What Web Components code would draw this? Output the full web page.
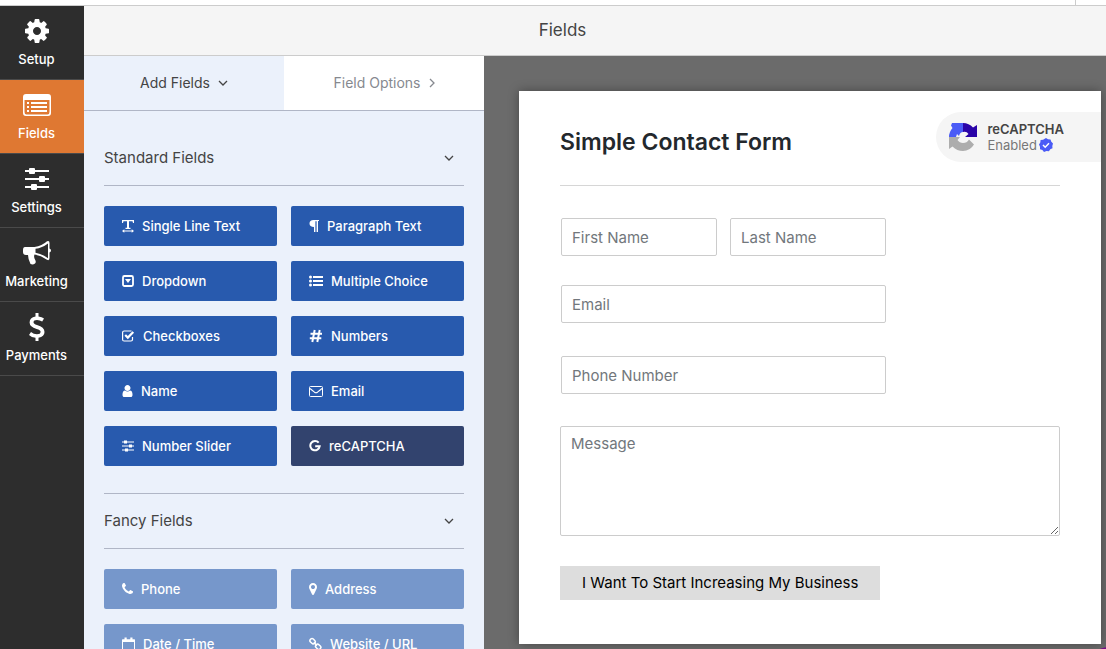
<!DOCTYPE html>
<html lang="en">
<head>
<meta charset="utf-8">
<meta name="viewport" content="width=device-width, initial-scale=1">
<title>Form Builder</title>
<style>
  html, body { height: 100%; margin: 0; }
  body {
    overflow: hidden;
    font-family: Inter, "Liberation Sans", sans-serif;
    color: #444;
  }
</style>
</head>
<body>
<form-builder></form-builder>

<script>
const ICONS = {
  cog: { box: "0 0 1792 1792", svg: `<path d="M1152 896q0-106-75-181t-181-75-181 75-75 181 75 181 181 75 181-75 75-181zm512-109v222q0 12-8 23t-20 13l-185 28q-19 54-39 91 35 50 107 138 10 12 10 25t-9 23q-27 37-99 108t-94 71q-12 0-26-9l-138-108q-44 23-91 38-16 136-29 186-7 28-36 28h-222q-14 0-24.5-8.5t-11.5-21.5l-28-184q-49-16-90-37l-141 107q-10 9-25 9-14 0-25-11-126-114-165-168-7-10-7-23 0-12 8-23 15-21 51-66.5t54-70.5q-27-50-41-99l-183-27q-13-2-21-12.5t-8-23.5v-222q0-12 8-23t19-13l186-28q14-46 39-92-40-57-107-138-10-12-10-24 0-10 9-23 26-36 98.5-107.5t94.5-71.5q13 0 26 10l138 107q44-23 91-38 16-136 29-186 7-28 36-28h222q14 0 24.5 8.5t11.5 21.5l28 184q49 16 90 37l142-107q9-9 24-9 13 0 25 10 129 119 165 170 7 8 7 22 0 12-8 23-15 21-51 66.5t-54 70.5q26 50 41 98l183 28q13 2 21 12.5t8 23.5z"/>` },
  form: { box: "0 0 28 28", svg: `<path fill-rule="evenodd" d="M3 3h22a3 3 0 0 1 3 3v16a3 3 0 0 1-3 3H3a3 3 0 0 1-3-3V6a3 3 0 0 1 3-3zM1.500 9v12q0 2.500 2 2.500h21q2 0 2-2.500V9z"/><path d="M4 11h2v2H4zm4 0h16v2H8zM4 15h2v2H4zm4 0h16v2H8zM4 19h2v2H4zm4 0h16v2H8z"/>` },
  sliders: { box: "0 0 28 28", svg: `<path d="M2 5h24v2H2zm0 8h24v2H2zm0 8h24v2H2z"/><rect x="6" y="3" width="6" height="6" rx="1"/><rect x="16" y="11" width="6" height="6" rx="1"/><rect x="8" y="19" width="6" height="6" rx="1"/>` },
  horn: { box: "0 0 28 28", svg: `<path fill-rule="evenodd" d="M2 8h9.500Q19 7 24 2.300Q26.500 1 26.500 4v5.500Q28 10 28 11.500T26.500 13.500V19q0 3-2.500 1.800Q18 16.500 11.500 15.500 10.500 18 12 20.500 13.500 23 12 24.500 10 26 7.500 25 5 20 5 16H3q-3 0-3-3v-2q0-3 2-3zM12.500 9.800v4q6.500 1 12.500 5.500V4.500Q19 9 12.500 9.800z"/>` },
  dollar: { box: "0 0 28 28", svg: `<path d="M12.500 0h3v3.500q3.500.3 5.500 2l-1.800 3Q17 7 14 7q-3.500 0-3.500 2.300 0 1.700 3.500 2.700 7.500 1.900 7.500 7 0 4.700-6 5.800V28h-3v-3.200q-4-.3-6.500-2.800l2-3q2.600 2.300 6 2.300 3.600 0 3.600-2.500 0-1.900-4-2.900Q6.600 14 6.600 9.500q0-4.800 5.900-5.900z"/>` },
  text: { box: "0 0 12 14", svg: `<path d="M0 1h12v3h-1L10.500 2.300H7v6.400h1.500V10h-5V8.700H5V2.300H1.500L1 4H0zm2.300 9.300V11.500h7.400v-1.200L12 12l-2.300 1.700v-1.200H2.300v1.200L0 12z"/>` },
  paragraph: { box: "0 0 10 14", svg: `<path d="M4.500 1H10v1H9v11H7.600V2.200H6.400V13H5V8Q.5 7.800.5 4.500.5 1 4.500 1z"/>` },
  dropdown: { box: "0 0 12 14", svg: `<rect x="1" y="2" width="10" height="10" rx="1.500" fill="none" stroke="currentColor" stroke-width="1.800"/><path d="M3 5h6L6 9z"/>` },
  list: { box: "0 0 14 14", svg: `<circle cx="1.500" cy="3" r="1.500"/><circle cx="1.500" cy="7" r="1.500"/><circle cx="1.500" cy="11" r="1.500"/><path d="M4 2h10v2H4zm0 4h10v2H4zm0 4h10v2H4z"/>` },
  check: { box: "0 0 13 14", svg: `<path d="M10.500 8v2.500q0 1.500-1.500 1.500H2.100Q.6 12 .6 10.500v-7Q.6 2 2.100 2H9.500" fill="none" stroke="currentColor" stroke-width="1.200"/><path d="M3.200 6l2.600 2.600L11.300 3" fill="none" stroke="currentColor" stroke-width="2.200"/>` },
  hash: { box: "0 0 14 14", svg: `<path d="M5.700 1L3.300 13M10.700 1L8.300 13M1.500 4.800H13M.8 9.200h11.500" fill="none" stroke="currentColor" stroke-width="2"/>` },
  user: { box: "192 0 1408 1792", svg: `<path d="M1536 1399q0 109-62.500 187t-150.500 78h-854q-88 0-150.500-78t-62.500-187q0-85 8.500-160.500t31.500-152 58.500-131 94-89 134.500-34.500q131 128 313 128t313-128q76 0 134.500 34.500t94 89 58.500 131 31.500 152 8.500 160.500zm-256-887q0 159-112.500 271.500t-271.500 112.500-271.500-112.500-112.500-271.500 112.500-271.500 271.500-112.500 271.500 112.500 112.500 271.500z"/>` },
  mail: { box: "0 0 14 14", svg: `<rect x=".5" y="2.500" width="13" height="10" rx="1" fill="none" stroke="currentColor"/><path d="M1 4.500q2 1.500 4.500 3.700 1.500 1 3 0Q11 6 13 4.500" fill="none" stroke="currentColor" stroke-width="1.100"/>` },
  slider: { box: "0 0 12 14", svg: `<path d="M0 2.500h12v1H0zm0 4h12v1H0zm0 4h12v1H0z"/><path d="M2 1.500h3v3H2zm5 4h3v3H7zm-4 4h3v3H3z"/>` },
  google: { box: "0 0 12 14", svg: `<path d="M9.700 3.700A4.700 4.700 0 1 0 10.700 7.200H6.200" fill="none" stroke="currentColor" stroke-width="2"/>` },
  phone: { box: "192 0 1408 1792", svg: `<path d="M1600 1240q0 27-10 70.500t-21 68.500q-21 50-122 106-94 51-186 51-27 0-53-3.500t-57.500-12.500-47-14.500-55.500-20.500-49-18q-98-35-175-83-127-79-264-216t-216-264q-48-77-83-175-3-9-18-49t-20.500-55.500-14.500-47-12.500-57.500-3.500-53q0-92 51-186 56-101 106-122 25-11 68.500-21t70.500-10q14 0 21 3 18 6 53 76 11 19 30 54t35 63.500 31 53.500q3 4 17.500 25t21.500 35.500 7 28.500q0 20-28.500 50t-62 55-62 53-28.500 46q0 9 5 22.500t8.500 20.500 14 24 11.500 19q76 137 174 235t235 174q2 1 19 11.500t24 14 20.500 8.500 22.500 5q18 0 46-28.500t53-62 55-62 50-28.500q14 0 28.500 7t35.500 21.500 25 17.500q25 15 53.500 31t63.500 35 54 30q70 35 76 53 3 7 3 21z"/>` },
  marker: { box: "384 0 1024 1792", svg: `<path d="M1152 640q0-106-75-181t-181-75-181 75-75 181 75 181 181 75 181-75 75-181zm256 0q0 109-33 179l-364 774q-16 33-47.500 52t-67.500 19-67.500-19-46.500-52l-365-774q-33-70-33-179 0-212 150-362t362-150 362 150 150 362z"/>` },
  calendar: { box: "0 0 13 14", svg: `<path d="M.5 3h12v10.500H.5z" fill="none" stroke="currentColor"/><path d="M0 2.500h13V5H0zM2.500.5h2.200v3H2.500zm5.800 0h2.200v3H8.300z"/>` },
  link: { box: "0 0 13 14", svg: `<g fill="none" stroke="currentColor" stroke-width="1.500"><rect x="-2.800" y="-2" width="5.600" height="4" rx="1.800" transform="translate(3.600 4.200) rotate(45)"/><rect x="-2.800" y="-2" width="5.600" height="4" rx="1.800" transform="translate(9.200 9.800) rotate(45)"/><path d="M4.800 5.400L8 8.600"/></g>` },
  down: { box: "0 0 10 10", svg: `<path d="M1 3l4 4 4-4" fill="none" stroke="currentColor" stroke-width="1.300"/>` },
  right: { box: "2 0 6 10", svg: `<path d="M3 1l4 4-4 4" fill="none" stroke="currentColor" stroke-width="1.300"/>` },
  captcha: { box: "0 0 28 28", svg: `<path fill="#4a5bf6" d="M14 0v9q-3 0-4 4l-2-2-1 3H0q0-5 3.500-9L2 2.500 3 0z"/><path fill="#2a04a8" d="M14 0q6 0 10 4.500L28 2v12H16l3.500-3q-2-3-5.500-2z"/><path fill="#adadad" d="M0 14h11L8.500 17q2 3 5.500 3 4 0 6-3.500l5 5Q21 28 14 28q-6 0-10.500-4.500L0 26z"/>` },
  verified: { box: "0 0 14 14", svg: `<path fill="#4a5bf6" d="M7 0l2 1.300L11.500 1.500l.8 2.300L14 5.500 13.300 8 13.500 10.200l-2.200 1.100L9.900 13.300 7.500 13 5 14 3.400 12 1 11.300 1 8.800 0 6.600 1.300 4.600 1.600 2.100 4.100 1.700z"/><path d="M4 7l2.200 2.200L10 5.300" fill="none" stroke="#fff" stroke-width="1.500"/>` }
};

function define(name, html, setup) {
  const template = document.createElement("template");
  template.innerHTML = html;
  customElements.define(name, class extends HTMLElement {
    constructor() {
      super();
      this.attachShadow({ mode: "open" }).appendChild(template.content.cloneNode(true));
    }
    connectedCallback() {
      if (setup) setup(this, this.shadowRoot);
    }
  });
}

// fills the icon inside a control from the host's icon attribute
function setIcon(host, root) {
  root.querySelector("fb-icon").setAttribute("name", host.getAttribute("icon"));
}

// height comes from --icon-size, width follows the viewBox
const iconTemplate = document.createElement("template");
iconTemplate.innerHTML = `
  <style>
    :host { display: inline-flex; flex: none; }
    svg { display: block; height: var(--icon-size, 14px); fill: currentColor; }
  </style>
  <svg aria-hidden="true"></svg>
`;

class FbIcon extends HTMLElement {
  static observedAttributes = ["name"];

  constructor() {
    super();
    this.attachShadow({ mode: "open" }).appendChild(iconTemplate.content.cloneNode(true));
  }

  attributeChangedCallback(attr, old, value) {
    const icon = ICONS[value];
    if (!icon) return;
    const svg = this.shadowRoot.querySelector("svg");
    svg.setAttribute("viewBox", icon.box);
    svg.innerHTML = icon.svg;
  }
}

customElements.define("fb-icon", FbIcon);

define("nav-item", `
  <style>
    :host { display: block; border-bottom: 1px solid #4a4a4a; }
    button {
      display: flex;
      flex-direction: column;
      align-items: center;
      gap: 4px;
      width: 100%;
      height: 73px;
      padding: 11px 11px 0 0;
      border: 0;
      background: none;
      color: #fff;
      font: 500 13px/20px Inter, sans-serif;
      cursor: pointer;
      box-sizing: border-box;
      --icon-size: 28px;
    }
    :host([active]) button { background: #df7832; }
  </style>
  <button type="button"><fb-icon></fb-icon><slot></slot></button>
`, setIcon);

define("panel-tab", `
  <style>
    :host { display: block; flex: 1; }
    button {
      display: flex;
      align-items: center;
      justify-content: center;
      gap: 8px;
      width: 100%;
      height: 54px;
      border: 0;
      background: #fff;
      color: #86898f;
      font: 400 14px/20px Inter, sans-serif;
      cursor: pointer;
      --icon-size: 10px;
    }
    :host([active]) button { background: #ebf1fb; color: #444; }
  </style>
  <button type="button"><slot></slot><fb-icon></fb-icon></button>
`, setIcon);

define("field-group", `
  <style>
    :host { display: block; padding-bottom: 27px; }
    button {
      display: flex;
      align-items: center;
      justify-content: space-between;
      width: 100%;
      height: 55px;
      padding: 0 10px 0 0;
      border: 0;
      border-bottom: 1px solid #b0b6c6;
      background: none;
      color: #444;
      font: 400 15px/24px Inter, sans-serif;
      cursor: pointer;
      --icon-size: 10px;
    }
    :host([ruled]) button { border-top: 1px solid #b0b6c6; height: 56px; }
    .grid {
      display: grid;
      grid-template-columns: 1fr 1fr;
      gap: 15px 14px;
      padding-top: 20px;
    }
  </style>
  <button type="button" aria-expanded="true"><span></span><fb-icon name="down"></fb-icon></button>
  <div class="grid"><slot></slot></div>
`, (host, root) => {
  root.querySelector("span").textContent = host.getAttribute("label");
});

define("field-button", `
  <style>
    :host { display: block; }
    button {
      display: flex;
      align-items: center;
      gap: 8px;
      width: 100%;
      height: 40px;
      padding: 0 18px;
      border: 0;
      border-radius: 2px;
      background: #285aae;
      color: #fff;
      font: 500 13px/20px Inter, sans-serif;
      white-space: nowrap;
      cursor: pointer;
    }
    :host([dark]) button { background: #32436e; }
    :host([locked]) button { background: #7697cb; }
  </style>
  <button type="button"><fb-icon></fb-icon><slot></slot></button>
`, setIcon);

define("text-field", `
  <style>
    :host { display: block; flex: 1; min-width: 0; }
    input, textarea {
      display: block;
      width: 100%;
      box-sizing: border-box;
      border: 1px solid #ccc;
      border-radius: 2px;
      background: #fff;
      color: #333;
      font: 400 15px/24px Inter, sans-serif;
    }
    input { height: 38px; padding: 0 10px; }
    textarea { height: 110px; padding: 5px 10px; resize: vertical; }
    ::placeholder { color: #72777c; opacity: 1; }
  </style>
`, (host, root) => {
  const control = document.createElement(host.hasAttribute("multiline") ? "textarea" : "input");
  const label = host.getAttribute("label");
  if (host.hasAttribute("type")) control.type = host.getAttribute("type");
  control.placeholder = label;
  control.setAttribute("aria-label", label);
  root.appendChild(control);
});

define("captcha-badge", `
  <style>
    :host {
      display: flex;
      align-items: center;
      gap: 10px;
      box-sizing: border-box;
      height: 50px;
      padding: 0 37px 0 13px;
      border-radius: 25px 0 0 25px;
      background: #f5f5f5;
      font-size: 13px;
      line-height: 16px;
    }
    .logo { --icon-size: 28px; }
    strong { display: block; font-weight: 600; color: #444; }
    .state { display: flex; align-items: center; gap: 2px; color: #777; }
  </style>
  <fb-icon class="logo" name="captcha"></fb-icon>
  <div>
    <strong>reCAPTCHA</strong>
    <span class="state">Enabled <fb-icon name="verified"></fb-icon></span>
  </div>
`);

define("form-preview", `
  <style>
    :host {
      display: block;
      background: #fff;
      box-shadow: 0 0 10px rgba(0, 0, 0, .35);
      --side: 41px;
    }
    header {
      display: flex;
      align-items: center;
      justify-content: space-between;
      padding: 21px 0 23px var(--side);
    }
    h2 {
      margin: 0;
      padding-top: 10px;
      font-size: 23px;
      line-height: 32px;
      font-weight: 600;
      color: #23282d;
    }
    form {
      display: flex;
      flex-direction: column;
      align-items: flex-start;
      margin: 0 var(--side);
      padding: 32px 0 44px;
      border-top: 1px solid #d6d6d6;
    }
    .row { display: flex; gap: 13px; width: 65%; margin-left: 1px; }
    .row.email { margin-top: 29px; }
    .row.phone { margin-top: 33px; }
    .message { flex: none; width: 100%; margin-top: 32px; }
    .submit {
      margin-top: 30px;
      height: 34px;
      padding: 0 22px;
      border: 0;
      background: #ddd;
      color: #000;
      font: 400 15px/24px Inter, sans-serif;
      white-space: nowrap;
    }
  </style>
  <header>
    <h2>Simple Contact Form</h2>
    <captcha-badge></captcha-badge>
  </header>
  <form>
    <div class="row">
      <text-field label="First Name"></text-field>
      <text-field label="Last Name"></text-field>
    </div>
    <div class="row email"><text-field label="Email" type="email"></text-field></div>
    <div class="row phone"><text-field label="Phone Number" type="tel"></text-field></div>
    <text-field class="message" label="Message" multiline></text-field>
    <button class="submit" type="button">I Want To Start Increasing My Business</button>
  </form>
`);

define("form-builder", `
  <style>
    :host {
      display: flex;
      flex-direction: column;
      position: relative;
      height: 100vh;
      overflow: hidden;
    }
    .strip {
      flex: none;
      display: flex;
      justify-content: flex-end;
      height: 5px;
      background: #fff;
      border-bottom: 1px solid #ccc;
    }
    .strip span { width: 30px; border-left: 1px solid #ccc; }
    .app { display: flex; flex: 1; min-height: 0; }
    nav { flex: none; width: 84px; background: #2d2d2d; }
    .main { display: flex; flex-direction: column; flex: 1; min-width: 0; }
    .toolbar {
      display: flex;
      align-items: center;
      justify-content: center;
      box-sizing: border-box;
      height: 50px;
      padding: 0 65px 2px 0;
      background: #f5f5f5;
      border-bottom: 1px solid #ccc;
    }
    h1 { margin: 0; font-size: 17px; line-height: 24px; font-weight: 400; }
    .work { display: flex; flex: 1; min-height: 0; }
    aside { flex: none; width: 400px; background: #ebf1fb; overflow: hidden; }
    .tabs { display: flex; border-bottom: 1px solid #b0b6c6; }
    .groups { padding: 20px; }
    .canvas {
      flex: 1;
      min-width: 0;
      padding: 35px 5px 5px 35px;
      background: #6b6b6b;
      overflow: hidden;
    }
    /* floating bubble, tucked under the window corner */
    .bubble {
      position: absolute;
      right: -32px;
      bottom: -54px;
      width: 56px;
      height: 56px;
      border-radius: 50%;
      background: #7a0a86;
    }
  </style>
  <div class="strip"><span></span></div>
  <div class="app">
    <nav aria-label="Builder">
      <nav-item icon="cog">Setup</nav-item>
      <nav-item icon="form" active>Fields</nav-item>
      <nav-item icon="sliders">Settings</nav-item>
      <nav-item icon="horn">Marketing</nav-item>
      <nav-item icon="dollar">Payments</nav-item>
    </nav>
    <div class="main">
      <div class="toolbar"><h1>Fields</h1></div>
      <div class="work">
        <aside>
          <div class="tabs">
            <panel-tab icon="down" active>Add Fields</panel-tab>
            <panel-tab icon="right">Field Options</panel-tab>
          </div>
          <div class="groups">
            <field-group label="Standard Fields">
              <field-button icon="text">Single Line Text</field-button>
              <field-button icon="paragraph">Paragraph Text</field-button>
              <field-button icon="dropdown">Dropdown</field-button>
              <field-button icon="list">Multiple Choice</field-button>
              <field-button icon="check">Checkboxes</field-button>
              <field-button icon="hash">Numbers</field-button>
              <field-button icon="user">Name</field-button>
              <field-button icon="mail">Email</field-button>
              <field-button icon="slider">Number Slider</field-button>
              <field-button icon="google" dark>reCAPTCHA</field-button>
            </field-group>
            <field-group label="Fancy Fields" ruled>
              <field-button icon="phone" locked>Phone</field-button>
              <field-button icon="marker" locked>Address</field-button>
              <field-button icon="calendar" locked>Date / Time</field-button>
              <field-button icon="link" locked>Website / URL</field-button>
            </field-group>
          </div>
        </aside>
        <div class="canvas"><form-preview></form-preview></div>
      </div>
    </div>
  </div>
  <span class="bubble"></span>
`);
</script>
</body>
</html>
